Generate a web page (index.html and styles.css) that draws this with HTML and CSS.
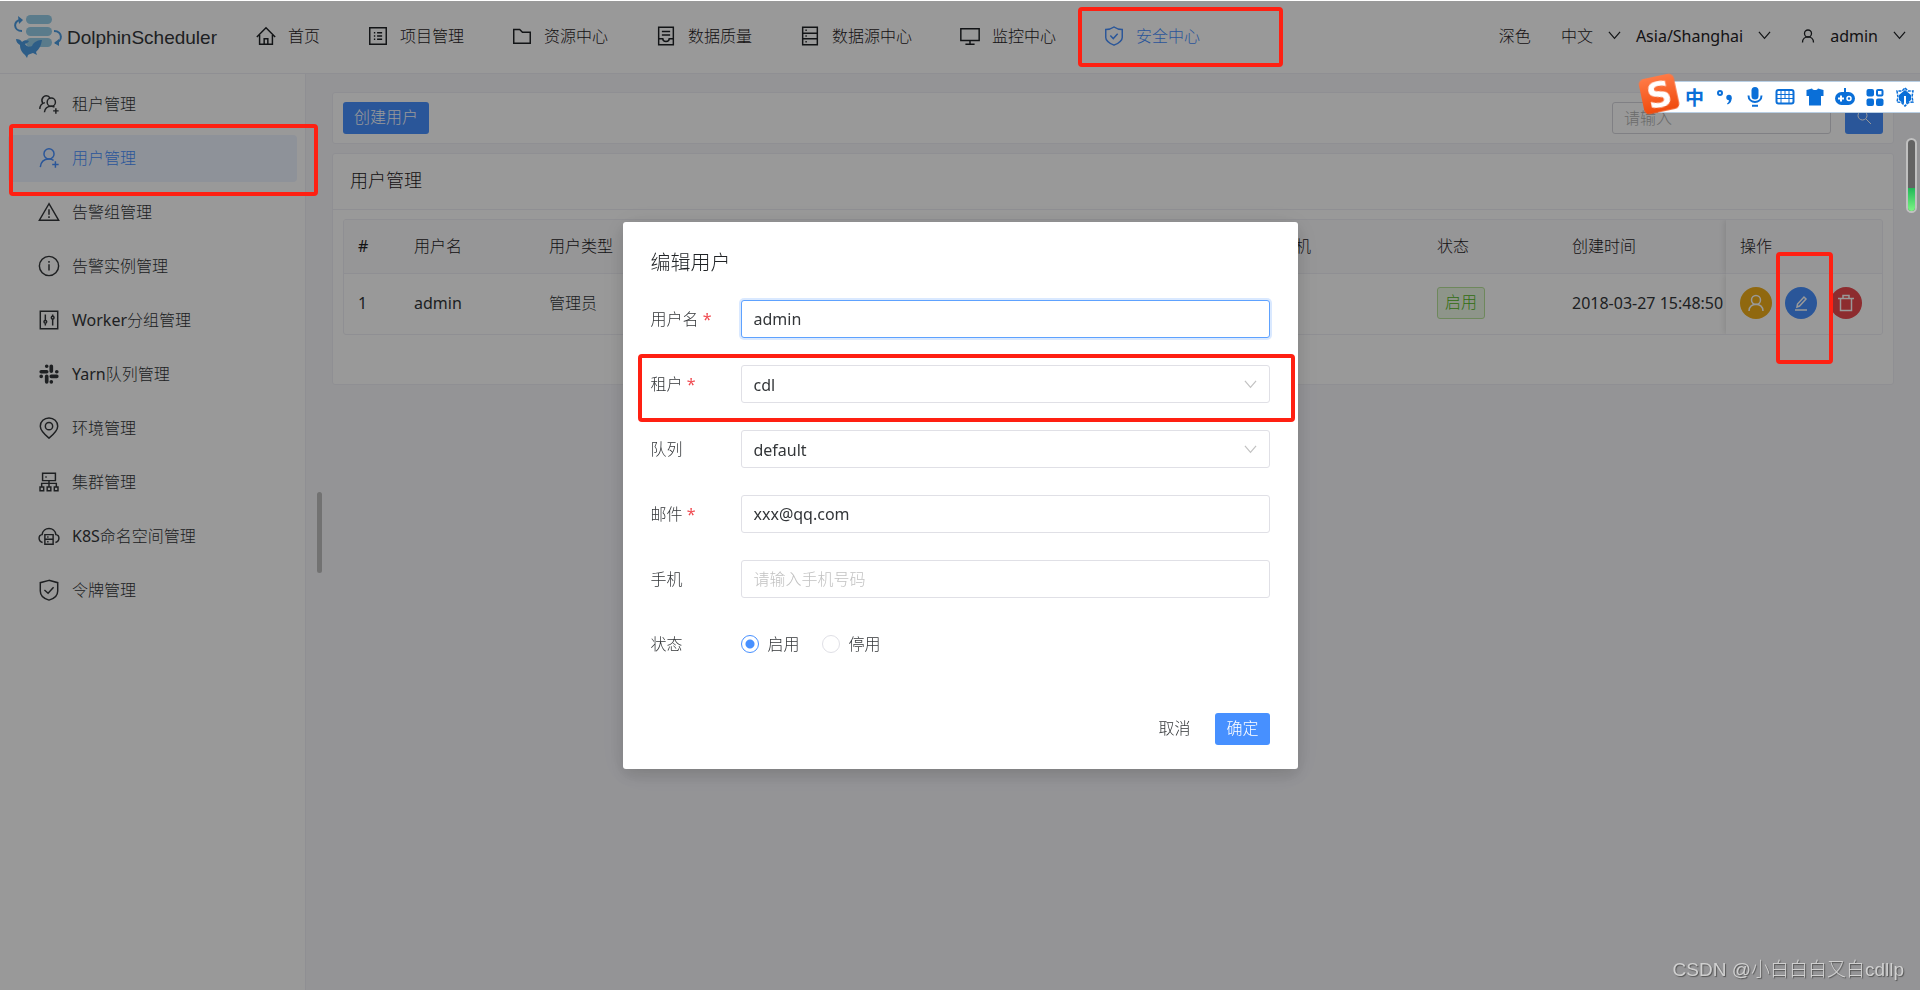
FILE: index.html
```html
<!DOCTYPE html>
<html lang="zh-CN">
<head>
<meta charset="utf-8">
<title>DolphinScheduler</title>
<link rel="stylesheet" href="styles.css">
</head>
<body>
<div class="app">
  <header class="topbar">
    <a class="brand" href="#">
      <svg class="brand-mark" viewBox="0 0 50 46" aria-hidden="true">
        <g fill="#96cde8"><rect x="12" y="2" width="26" height="9" rx="4.500"/><rect x="12" y="14" width="26" height="9" rx="4.500"/><rect x="12" y="25" width="26" height="9" rx="4.500"/></g>
        <g fill="none" stroke="#4b9ce2" stroke-width="2"><path d="M8 18C-1 18-1 7 7 7"/><path d="M40 18c9 0 9 11 1 12"/></g>
        <path fill="#4b9ce2" d="M4 3l5 4-4 4zM45 26l-5 4 5 3z"/>
        <path fill="#4b9ce2" d="M2 26c3 0 5 1 6 3 2-2 5-2 7-1-1 2-3 2-4 3 2 3 5 3 7 2 2-5 7-6 10-6-1 6-3 9-6 12l1 3-4-2c-2 1-4 1-5 2l-1 3-2-3c-4-3-5-7-5-10-2-1-4-3-4-6z"/>
      </svg>
      <span>DolphinScheduler</span>
    </a>
    <nav class="mainnav">
      <a href="#"><svg class="icon" viewBox="0 0 24 24"><path d="M2 13L12 3l10 10M5 11v10h14V11M10 21v-6h4v6"/></svg>首页</a>
      <a href="#"><svg class="icon" viewBox="0 0 24 24"><path d="M3 3h18v18H3zM7.500 8.500h1.500M11 8.500h5.500M7.500 12h1.500M11 12h5.500M7.500 15.500h1.500M11 15.500h5.500"/></svg>项目管理</a>
      <a href="#"><svg class="icon" viewBox="0 0 24 24"><path d="M3 5h6.500l3 3H21v12H3z"/></svg>资源中心</a>
      <a href="#"><svg class="icon" viewBox="0 0 24 24"><path d="M4 2.500h16v19H4zM7.500 7h9M7.500 11h9M4 15h4.500c0 4 7 4 7 0H20"/></svg>数据质量</a>
      <a href="#"><svg class="icon" viewBox="0 0 24 24"><path d="M4 2.500h16v19H4zM4 9h16M4 15h16M7 5.800h1.500M7 12h1.500M7 18.200h1.500"/></svg>数据源中心</a>
      <a href="#"><svg class="icon" viewBox="0 0 24 24"><path d="M2 4h20v13H2zM12 17v3.500M7 21h10"/></svg>监控中心</a>
      <a href="#" class="active"><svg class="icon" viewBox="0 0 24 24"><path d="M12 2.200C9.500 4 6.500 5 3 5v8.500c0 3 4 6.300 9 8.500 5-2.200 9-5.500 9-8.500V5c-3.500 0-6.500-1-9-2.800zM8 11.500l3.200 3.300L16 9.500"/></svg>安全中心</a>
    </nav>
    <div class="tools">
      <button type="button">深色</button>
      <button type="button" class="lang">中文<svg class="chev" viewBox="0 0 14 14"><path d="M1 3l6 7 6-7"/></svg></button>
      <button type="button" class="zone">Asia/Shanghai<svg class="chev" viewBox="0 0 14 14"><path d="M1 3l6 7 6-7"/></svg></button>
      <button type="button" class="account"><svg class="user" viewBox="0 0 14 14"><circle cx="7" cy="4.500" r="3.500"/><path d="M1.500 13.500c0-7.500 11-7.500 11 0"/></svg>admin<svg class="chev" viewBox="0 0 14 14"><path d="M1 3l6 7 6-7"/></svg></button>
    </div>
  </header>

  <div class="body">
    <aside class="sidebar">
      <a href="#"><svg class="icon" viewBox="0 0 24 24"><circle cx="14.500" cy="10" r="4.500"/><path d="M7 21c.5-4 3-6.500 7.500-6.500 1.500 0 2.500.3 3.500 1M19.500 16.500v6M16.500 19.500h6M5 11C2.500 6 7 1.500 11 3.500c1 .5 1.500 1 2 2M7.500 10.500C4 11.500 2 13.500 2 17.500"/></svg>租户管理</a>
      <a href="#" class="active"><svg class="icon" viewBox="0 0 24 24"><circle cx="12" cy="7.500" r="5.500"/><path d="M2.500 22c.5-6 4-9 9.500-9 2 0 3.500.5 5 1.500M19 15.500v7M15.500 19h7"/></svg>用户管理</a>
      <a href="#"><svg class="icon" viewBox="0 0 24 24"><path d="M12 3L1.500 21h21zM12 9v6M12 16.500v2"/></svg>告警组管理</a>
      <a href="#"><svg class="icon" viewBox="0 0 24 24"><circle cx="12" cy="12" r="10.500"/><path d="M12 10v7M12 6.500v2"/></svg>告警实例管理</a>
      <a href="#"><svg class="icon" viewBox="0 0 24 24"><path d="M2.500 2.500h19v19h-19zM8 6v7M8 16v2M16 6v2M16 11v7"/><circle cx="8" cy="14" r="1.500"/><circle cx="16" cy="9.500" r="1.500"/></svg>Worker分组管理</a>
      <a href="#"><svg class="icon" viewBox="0 0 24 24"><g stroke-width="4" stroke-linecap="round"><path d="M9.500 3.500h0M14.500 3.500v5.500M3.500 9.500h6M20.500 9.500h0M3.500 14.500h0M14.500 14.500h6M9.500 14.500v6M14.500 20.500h0"/></g></svg>Yarn队列管理</a>
      <a href="#"><svg class="icon" viewBox="0 0 24 24"><path d="M12 23C6 18 2.500 14.500 2.500 10a9.500 9 0 0 1 19 0c0 4.500-3.500 8-9.500 13z"/><circle cx="12" cy="10" r="4"/></svg>环境管理</a>
      <a href="#"><svg class="icon" viewBox="0 0 24 24"><path d="M5 2.500h14v8H5zM8 6.500h1.500M12 10.500V17M4 17v-3.500h16V17M2.200 17.500h4v4h-4zM10 17.500h4v4h-4zM17.800 17.500h4v4h-4z"/></svg>集群管理</a>
      <a href="#"><svg class="icon" viewBox="0 0 24 24"><path d="M5 19C0 18 0 11 4.500 10.500 5.500 1.500 18.500 1.500 19.500 10.500 24 11 24 18 19 19M7.500 10.500h9v10.500h-9zM7.500 15.500h9M10 13h1.500M10 18.300h1.500"/></svg>K8S命名空间管理</a>
      <a href="#"><svg class="icon" viewBox="0 0 24 24"><path d="M12 1.500L2.500 4v9c0 5 4 8.500 9.500 10 5.500-1.500 9.500-5 9.500-10V4zM7 12l4 3.500L17 9"/></svg>令牌管理</a>
    </aside>

    <main class="content">
      <span class="splitter"></span>
      <section class="card toolbar">
        <button type="button" class="btn primary">创建用户</button>
        <div class="search">
          <input type="text" placeholder="请输入" aria-label="请输入">
          <button type="button" class="btn primary search-btn" aria-label="搜索"><svg viewBox="0 0 16 16"><circle cx="6.500" cy="6.500" r="4.500"/><path d="M10 10l5 5"/></svg></button>
        </div>
      </section>
      <section class="card">
        <h2 class="card-title">用户管理</h2>
        <div class="card-body">
          <div class="table-wrap">
            <table>
              <colgroup><col class="c-index"><col class="c-std"><col class="c-std"><col class="c-std"><col class="c-std"><col><col class="c-phone"><col class="c-std"><col class="c-time"><col class="c-ops"></colgroup>
              <thead>
                <tr><th>#</th><th>用户名</th><th>用户类型</th><th></th><th></th><th></th><th>手机</th><th>状态</th><th>创建时间</th><th class="fixed">操作</th></tr>
              </thead>
              <tbody>
                <tr>
                  <td>1</td><td>admin</td><td>管理员</td><td></td><td></td><td></td><td></td>
                  <td><span class="tag">启用</span></td>
                  <td class="time">2018-03-27 15:48:50</td>
                  <td class="fixed">
                    <div class="ops">
                      <button type="button" class="round warn" aria-label="授权"><svg viewBox="0 0 18 18"><circle cx="9" cy="6" r="4.500"/><path d="M2 17c0-9 14-9 14 0"/></svg></button>
                      <button type="button" class="round info" aria-label="编辑"><svg viewBox="0 0 18 18"><path d="M3 16h12M5 13l.5-3L12 3l2 2-6.500 7z"/></svg></button>
                      <button type="button" class="round danger" aria-label="删除"><svg viewBox="0 0 18 18"><path d="M1 4.500h16M6 4V1.500h6V4M3.500 4.500V16.500h11V4.500"/></svg></button>
                    </div>
                  </td>
                </tr>
              </tbody>
            </table>
          </div>
        </div>
      </section>
    </main>
  </div>
</div>

<div class="mask">
  <form class="dialog" role="dialog" aria-labelledby="dlg-title">
    <h1 id="dlg-title">编辑用户</h1>
    <div class="fields">
      <label for="f-name">用户名 <i>*</i></label>
      <input id="f-name" class="field focused" type="text" value="admin">
      <label for="f-tenant">租户 <i>*</i></label>
      <div class="select"><select id="f-tenant" class="field"><option>cdl</option></select><svg class="chev" viewBox="0 0 14 14"><path d="M1 3l6 7 6-7"/></svg></div>
      <label for="f-queue">队列</label>
      <div class="select"><select id="f-queue" class="field"><option>default</option></select><svg class="chev" viewBox="0 0 14 14"><path d="M1 3l6 7 6-7"/></svg></div>
      <label for="f-mail">邮件 <i>*</i></label>
      <input id="f-mail" class="field" type="text" value="xxx@qq.com">
      <label for="f-phone">手机</label>
      <input id="f-phone" class="field" type="text" placeholder="请输入手机号码">
      <span class="label">状态</span>
      <div class="radios">
        <label><input type="radio" name="state" checked>启用</label>
        <label><input type="radio" name="state">停用</label>
      </div>
    </div>
    <div class="actions">
      <button type="button" class="btn plain">取消</button>
      <button type="button" class="btn primary ok">确定</button>
    </div>
  </form>
</div>

<div class="mark mark-nav"></div>
<div class="mark mark-side"></div>
<div class="mark mark-tenant"></div>
<div class="mark mark-edit"></div>

<div class="ime">
  <svg class="ime-logo" viewBox="0 0 40 40"><defs><linearGradient id="og" x2="0" y2="1"><stop offset="0" stop-color="#ff7a45"/><stop offset="1" stop-color="#f04a0c"/></linearGradient></defs><g transform="rotate(-12 20 20)"><rect x="3" y="3" width="34" height="34" rx="5" fill="url(#og)"/><text class="ime-s" x="20" y="32" text-anchor="middle">S</text></g></svg>
  <span class="ime-zh">中</span>
  <svg viewBox="0 0 20 20"><circle cx="5" cy="6" r="2" fill="none" stroke="#0a6fd8" stroke-width="2"/><circle cx="14" cy="10.500" r="2.700"/><path d="M16.700 10.500c0 4-1.500 6-4 7l-.7-1c1.500-1 2-2 2-4z"/></svg>
  <svg viewBox="0 0 20 20"><rect x="6.500" y="0" width="7" height="12.500" rx="3.500"/><path d="M3.500 8.500c0 8.500 13 8.500 13 0M7 18.800h6" fill="none" stroke="#0a6fd8" stroke-width="2"/></svg>
  <svg viewBox="0 0 20 20"><rect x="1.500" y="3" width="17" height="13.500" rx="2" fill="none" stroke="#0a6fd8" stroke-width="2"/><path d="M2 7.500h16M2 11.500h16M6 3v9M10 3v9M14 3v9M6 12v4M14 12v4" stroke="#0a6fd8"/></svg>
  <svg viewBox="0 0 20 20"><path d="M1.500 3L7 1.500c1 2 5 2 6 0L18.500 3v6H16v9.500H4V9H1.500z"/></svg>
  <svg viewBox="0 0 20 20"><path d="M10 1v5" stroke="#0a6fd8" stroke-width="2"/><rect x="0" y="5" width="20" height="13" rx="6.500"/><path d="M3 11.500h6M6 8.500v6" stroke="#fff" stroke-width="2"/><circle cx="14" cy="11.500" r="2" fill="none" stroke="#fff" stroke-width="1.500"/></svg>
  <svg viewBox="0 0 20 20"><rect x="1.500" y="2" width="7.500" height="7.500" rx="2"/><rect x="12" y="3" width="5.500" height="5.500" rx="1" fill="none" stroke="#0a6fd8" stroke-width="2"/><rect x="1.500" y="11.500" width="7.500" height="7.500" rx="2"/><rect x="11" y="11.500" width="7.500" height="7.500" rx="2"/></svg>
  <svg viewBox="0 0 20 20"><path d="M10 1l3 3 5 0-1 6 1 5-4.500.5L10 19l-3.500-3.500L2 15l1-5-1-6h5z" fill="none" stroke="#0a6fd8" stroke-dasharray="3 1" stroke-width="1.500"/><path d="M10 3l6 5v5l-5 4V9H9v8l-5-4V8z"/></svg>
</div>
<div class="gauge"><span></span></div>
<div class="watermark">CSDN @小白白白又白cdllp</div>
</body>
</html>
```
FILE: styles.css
```css
* { box-sizing: border-box; }

body {
  margin: 0;
  font: 16px/24px "Noto Sans", "Noto Sans CJK SC Light", "Noto Sans CJK SC", sans-serif;
  color: #333639;
  background: #fff;
}

a { color: inherit; text-decoration: none; }
button, input, select { font: inherit; color: inherit; margin: 0; }
button { background: none; border: 0; padding: 0; }
svg { display: block; flex: none; fill: none; stroke: currentColor; }
h1, h2 { margin: 0; font-weight: 400; }

.app {
  display: flex;
  flex-direction: column;
  min-height: 100vh;
  border-top: 1px solid #fff;
}

.topbar {
  display: flex;
  align-items: center;
  height: 73px;
  padding: 0 14px 3px;
  border-bottom: 1px solid #efeff5;
}
.brand {
  display: flex;
  align-items: center;
  gap: 3px;
  width: 241px;
  font: 19px/24px "Liberation Sans", sans-serif;
}
.brand span { padding-top: 4px; }
.brand-mark { width: 50px; height: 46px; stroke: none; }
.mainnav { display: flex; gap: 47px; color: #1f2225; }
.mainnav a { display: flex; align-items: center; gap: 11px; white-space: nowrap; }
.sidebar a { display: flex; align-items: center; gap: 12px; white-space: nowrap; }
.icon { width: 22px; height: 22px; stroke-width: 1.6; }
.mainnav .active, .sidebar .active { color: #4790ff; }

.tools { display: flex; align-items: center; gap: 15px; margin-left: auto; color: #1f2225; white-space: nowrap; }
.tools button { display: flex; align-items: center; gap: 15px; }
.chev { width: 13px; height: 13px; stroke-width: 1.3; }
.lang, .account { margin-left: 15px; }
.user { width: 14px; height: 14px; stroke-width: 1.3; }

.body { display: flex; flex: 1; }
.sidebar {
  display: flex;
  flex-direction: column;
  gap: 7px;
  flex: none;
  width: 306px;
  padding: 7px 8px;
  border-right: 1px solid #efeff5;
}
.sidebar a { height: 47px; padding: 0 0 2px 30px; border-radius: 4px; }
.sidebar .active { background: #edf4ff; }

.content {
  position: relative;
  display: flex;
  flex-direction: column;
  gap: 9px;
  flex: 1;
  min-width: 0;
  padding: 18px 26px;
  background: #f7f7fb;
}
.splitter {
  position: absolute;
  left: 11px;
  top: calc(50% - 40px);
  width: 5px;
  height: 81px;
  border-radius: 3px;
  background: #bebebe;
}
.card { background: #fff; border: 1px solid #efeff5; border-radius: 3px; }
.toolbar { display: flex; justify-content: space-between; padding: 9px 10px; }
.btn { height: 32px; padding: 0 11px 2px; border-radius: 3px; }
.primary { color: #fff; background: #4790ff; }
.search { display: flex; gap: 14px; }
.search input {
  width: 219px;
  height: 32px;
  padding: 0 11px;
  border: 1px solid #d6d6dc;
  border-radius: 3px;
  background: none;
}
::placeholder { color: #c2c2c2; opacity: 1; }
.search input::placeholder { color: #b2b2b2; }
.search-btn svg { width: 16px; height: 16px; }

.card-title { padding: 14px 17px 17px; font-size: 18px; line-height: 24px; color: #1f2225; border-bottom: 1px solid #efeff5; }
.card-body { padding: 9px 10px 49px; }
.table-wrap { border: 1px solid #efeff5; border-radius: 3px; overflow: hidden; }
table { width: 100%; table-layout: fixed; border-collapse: separate; border-spacing: 0; }
th, td { padding: 0 14px 2px; text-align: left; font-weight: 400; white-space: nowrap; }
th { height: 54px; background: #fafafc; border-bottom: 1px solid #efeff5; color: #1f2225; }
td { height: 60px; }
.c-index { width: 56px; }
.c-std { width: 135px; }
.c-phone { width: 158px; }
.c-time { width: 168px; }
.c-ops { width: 156px; }
.time { padding-right: 0; }
.fixed { box-shadow: -1px 0 6px #0000001f; clip-path: inset(0 0 0 -12px); }
td.fixed { background: #fff; }
.tag {
  display: inline-block;
  padding: 2px 7px 4px;
  border: 1px solid #b8e39a;
  border-radius: 3px;
  background: #edf9e6;
  color: #52b81a;
}
.ops { display: flex; gap: 13px; }
.round { display: grid; place-items: center; flex: none; width: 32px; height: 32px; border-radius: 50%; color: #fff; }
.round svg { width: 18px; height: 18px; stroke-width: 1.5; }
.warn { background: #f0ae1a; }
.info { background: #4790ff; }
.danger { background: #eb4a4f; }

.mask {
  position: fixed;
  inset: 1px 0 0;
  display: grid;
  place-items: center;
  background: rgba(0, 0, 0, .4);
}
.dialog {
  width: 675px;
  padding: 28px 28px 24px;
  background: #fff;
  border-radius: 3px;
  box-shadow: 0 6px 16px rgba(0, 0, 0, .12), 0 3px 30px rgba(0, 0, 0, .08);
}
.dialog h1 { font-size: 20px; line-height: 26px; color: #1f2225; }
.fields { display: grid; grid-template-columns: 90px 1fr; gap: 27px 0; align-items: center; margin-top: 24px; line-height: 38px; }
.fields i { font-style: normal; color: #f04a50; }
.field {
  display: block;
  width: 100%;
  height: 38px;
  padding: 0 12px;
  border: 1px solid #e0e0e6;
  border-radius: 3px;
  background: #fff;
  appearance: none;
  outline: none;
}
select.field { padding-bottom: 5px; }
.focused { border-color: #5ea2ff; box-shadow: 0 0 0 2px #4790ff33; }
.select { position: relative; }
.select .chev { position: absolute; right: 13px; top: 13px; color: #c2c2c2; }
.radios { display: flex; gap: 22px; }
.radios label { display: flex; align-items: center; gap: 9px; }
.radios input { appearance: none; width: 18px; height: 18px; border: 1px solid #e0e0e6; border-radius: 50%; }
.radios input:checked { border-color: #4790ff; background: radial-gradient(#4790ff 0 4px, #fff 5px); }
.actions { display: flex; justify-content: flex-end; gap: 14px; margin-top: 50px; }

.mark { position: absolute; border: 4px solid #ff2012; border-radius: 4px; pointer-events: none; }
.mark-nav { left: 1078px; top: 7px; width: 205px; height: 60px; }
.mark-side { left: 9px; top: 124px; width: 309px; height: 72px; }
.mark-tenant { left: 638px; top: 354px; width: 657px; height: 68px; }
.mark-edit { left: 1776px; top: 252px; width: 57px; height: 112px; }

.ime {
  position: absolute;
  right: 0;
  top: 81px;
  display: flex;
  align-items: center;
  gap: 10px;
  width: 262px;
  height: 32px;
  padding-left: 26px;
  background: #fff;
  border: 1px solid #b9cfe4;
  border-right: 0;
  color: #0a6fd8;
}
.ime svg { width: 20px; height: 20px; fill: #0a6fd8; stroke: none; }
.ime .ime-logo { position: absolute; left: -21px; top: -9px; width: 42px; height: 42px; overflow: visible; }
.ime-s { font: bold 33px "DejaVu Sans", sans-serif; fill: #fff; }
.ime-zh { width: 20px; font: bold 19px/24px "Noto Sans CJK SC", sans-serif; }

.gauge {
  position: absolute;
  right: 3px;
  top: 138px;
  display: flex;
  align-items: flex-end;
  width: 11px;
  height: 75px;
  border: 2px solid #c0c0c0;
  border-radius: 6px;
  background: #636363;
  overflow: hidden;
}
.gauge span { width: 100%; height: 23px; background: linear-gradient(#20b858, #7cf584); }

.watermark {
  position: absolute;
  right: 16px;
  bottom: 8px;
  font: 19px/24px "Liberation Sans", "Noto Sans CJK SC Light", "Noto Sans CJK SC", sans-serif;
  color: #d0d0d0;
  text-shadow: 1px 1px 1px #555;
}
```
